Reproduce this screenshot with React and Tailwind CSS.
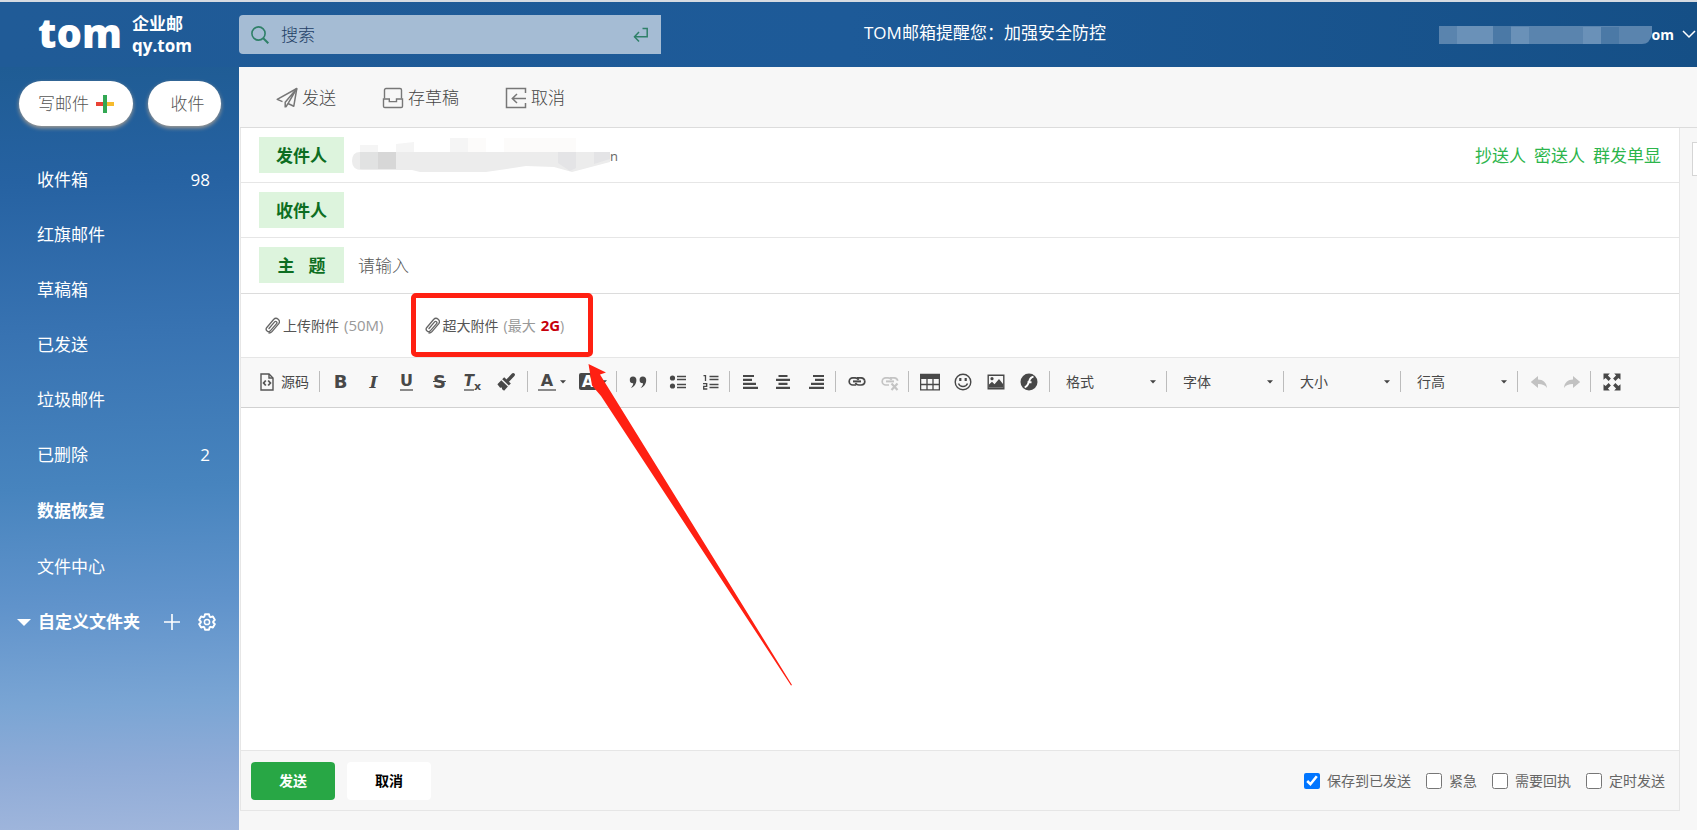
import React, { useState } from 'react';

const folders = [
  { name: '收件箱', count: 98 },
  { name: '红旗邮件' },
  { name: '草稿箱' },
  { name: '已发送' },
  { name: '垃圾邮件' },
  { name: '已删除', count: 2 },
  { name: '数据恢复', bold: true },
  { name: '文件中心' },
];

const combos = ['格式', '字体', '大小', '行高'];

/* ---------- icons ---------- */

const SearchIcon = () => (
  <svg width="18" height="18" viewBox="0 0 18 18" fill="none" stroke="#2f8068" strokeWidth="1.6">
    <circle cx="7.5" cy="7.5" r="6.6" />
    <path d="M12 12l5.3 5.3" strokeWidth="2" />
  </svg>
);

const EnterIcon = () => (
  <svg width="16" height="16" viewBox="0 0 16 16" fill="none" stroke="#2f8068" strokeWidth="1.5">
    <path d="M9.5 1.5h4.7v8.2H1.5" />
    <path d="M6 5L1.5 9.7L6 14.5" />
  </svg>
);

const SendIcon = () => (
  <svg width="22" height="22" viewBox="0 0 22 22" fill="none" stroke="#777" strokeWidth="1.5" strokeLinejoin="round">
    <path d="M6.5 14.6L1.2 12.4L20.8 1.5L17.8 19.2L12 16.5" />
    <path d="M20.8 1.5L9.2 15.2v5.4M20.8 1.5L12.4 15.8L9.8 20" />
  </svg>
);

const DraftIcon = () => (
  <svg width="22" height="22" viewBox="0 0 22 22" fill="none" stroke="#777" strokeWidth="1.4">
    <path d="M2.5 11.5V3a1.5 1.5 0 0 1 1.5-1.5h14a1.5 1.5 0 0 1 1.5 1.5v8.5" />
    <path d="M1.5 12h5.8v2.6h7.2V12h6v7.2a1.3 1.3 0 0 1-1.3 1.3H2.8a1.3 1.3 0 0 1-1.3-1.3z" />
  </svg>
);

const CancelIcon = () => (
  <svg width="22" height="22" viewBox="0 0 22 22" fill="none" stroke="#777" strokeWidth="1.5">
    <path d="M20.5 6V1.5h-19v19h19V16" />
    <path d="M21 11.5H7.5M12 7l-4.7 4.5L12 16" />
  </svg>
);

const ClipIcon = () => (
  <svg width="15" height="17" viewBox="0 0 15 17" fill="none" stroke="#666" strokeWidth="1.3" strokeLinecap="round">
    <path d="M4 11.5l5.6-6.6a1.3 1.3 0 0 1 2 1.7L5.5 13.6a2.4 2.4 0 0 1-3.7-3.1l6.8-8a3.3 3.3 0 0 1 5 4.3l-6.6 7.8a4 4 0 0 1-3 1.4" />
  </svg>
);

const GearIcon = () => (
  <svg width="18" height="18" viewBox="0 0 18 18" fill="none" stroke="#fff" strokeWidth="1.9" strokeLinejoin="round">
    <path d="M7 1.3h4l.6 2.3 1 .6 2.3-.7 2 3.4-1.7 1.6v1l1.7 1.6-2 3.4-2.3-.7-1 .6-.6 2.3H7l-.6-2.3-1-.6-2.3.7-2-3.4 1.7-1.6v-1L1.1 6.9l2-3.4 2.3.7 1-.6z" />
    <circle cx="9" cy="9" r="2.6" strokeWidth="1.5" />
  </svg>
);

const Caret = () => (
  <svg width="6" height="4" viewBox="0 0 6 4" fill="#444">
    <path d="M0 .3h6L3 3.6z" />
  </svg>
);

const Icon = ({ children, w = 18 }) => (
  <svg width={w} height="18" viewBox={`0 0 ${w} 18`} fill="none" stroke="#484848">
    {children}
  </svg>
);

const BrushIcon = () => (
  <Icon>
    <path d="M16.2 1.8L11 7.2" strokeWidth="3.4" strokeLinecap="round" />
    <path d="M7.2 4.2l6.6 6.3-2 2L5.2 6.2z" fill="#484848" stroke="none" />
    <path d="M4.3 7.2l6.6 6.3-3.8 4.2-2-1.5-.3-1.7-1.7.2-2.7-3.4z" fill="#484848" stroke="none" />
  </Icon>
);

const QuoteIcon = () => (
  <Icon>
    <path
      d="M4 3.5a3.3 3.3 0 0 1 3.4 3.6c0 4-2.4 7-5.6 8 1.7-1.6 2.5-3.3 2.4-4.8A3.3 3.3 0 0 1 .8 7 3.3 3.3 0 0 1 4 3.5zM13.8 3.5a3.3 3.3 0 0 1 3.4 3.6c0 4-2.4 7-5.6 8 1.7-1.6 2.5-3.3 2.4-4.8a3.3 3.3 0 0 1-3.4-3.3 3.3 3.3 0 0 1 3.2-3.5z"
      fill="#484848"
      stroke="none"
    />
  </Icon>
);

const BulletsIcon = () => (
  <Icon>
    <circle cx="3.5" cy="5" r="2.6" fill="#484848" stroke="none" />
    <circle cx="3.5" cy="13" r="2.6" fill="#484848" stroke="none" />
    <path d="M8 3.5h9M8 6.5h9M8 11.5h9M8 14.5h9" strokeWidth="1.3" />
  </Icon>
);

const NumbersIcon = () => (
  <Icon>
    <path d="M1.5 2.7h2V8M1 10.7h3.7v2.6H1.7V16h3.6" strokeWidth="1.3" />
    <path d="M7.5 3.5h9M7.5 6.5h9M7.5 11.5h9M7.5 14.5h9" strokeWidth="1.3" />
  </Icon>
);

const AlignIcon = ({ d }) => (
  <Icon>
    <path d={d} strokeWidth="2.2" />
  </Icon>
);

const LinkIcon = ({ broken }) => (
  <svg width="18" height="18" viewBox="0 0 18 18" fill="none" stroke={broken ? '#c4c4c4' : '#484848'} strokeWidth="1.7">
    <path d="M8 12H4.8a3.6 3.6 0 0 1 0-7.2h2.4q2.4 0 3.4 2M9 4.8h4.2q3 .2 3.6 3" />
    <path d="M5 8.4h8" strokeWidth="2" />
    {broken ? (
      <path d="M10.5 10.5l6 6.5M16.5 10.5l-6 6.5" strokeWidth="2.2" />
    ) : (
      <path d="M16.8 7.8q.2 4-3.6 4.2h-2.4q-2.4 0-3.4-2" />
    )}
  </svg>
);

const TableIcon = () => (
  <Icon w={20}>
    <path d="M.6 1.5h18.8v15.4H.6zM.6 11.5h18.8M7 5v12M13 5v12" strokeWidth="1.3" />
    <path d="M0 1h20v5H0z" fill="#484848" stroke="none" />
  </Icon>
);

const SmileIcon = () => (
  <Icon>
    <circle cx="9" cy="9" r="7.8" strokeWidth="1.4" />
    <path d="M6.3 5v3M11.7 5v3" strokeWidth="2.2" />
    <path d="M4.5 10.5c1.5 4 7.5 4 9 0" strokeWidth="1.4" />
  </Icon>
);

const ImageIcon = () => (
  <Icon>
    <path d="M1.2 2.2h15.6v13.6H1.2z" strokeWidth="1.4" />
    <circle cx="5" cy="5.7" r="1.6" fill="#484848" stroke="none" />
    <path d="M2 14.8v-3.3l3-2.8 2.5 2.5L12 6l4 5v3.8z" fill="#484848" stroke="none" />
  </Icon>
);

const FlashIcon = () => (
  <Icon>
    <circle cx="9" cy="9" r="8.5" fill="#484848" stroke="none" />
    <path d="M13.5 3.8c-3.3.2-3.6 2.5-4.6 5.2s-1.7 4.7-4.2 5.2M7.5 9.3h4" stroke="#fff" strokeWidth="1.9" />
  </Icon>
);

const UndoIcon = ({ flip }) => (
  <svg width="18" height="18" viewBox="0 0 18 18" fill="#c2c2c2" className={flip ? '-scale-x-100' : ''}>
    <path d="M.8 9L8 3v3.5c5 .1 8.6 3 9 8.5-2-3-4.5-4-9-4V15z" />
  </svg>
);

const MaximizeIcon = () => (
  <Icon>
    <path
      d="M.5.5h6.3L4.9 2.6l3 3-2.3 2.3-3-3L.5 6.8zM17.5.5v6.3l-2.1-1.9-3 3-2.3-2.3 3-3L11.2.5zM.5 17.5v-6.3l2.1 1.9 3-3 2.3 2.3-3 3 1.9 2.1zM17.5 17.5h-6.3l1.9-2.1-3-3 2.3-2.3 3 3 2.1-1.9z"
      fill="#484848"
      stroke="none"
    />
  </Icon>
);

const SourceIcon = () => (
  <svg width="14" height="18" viewBox="0 0 14 18" fill="none" stroke="#555" strokeWidth="1.4">
    <path d="M1 1h8l4 4v12H1z" />
    <path d="M9 1v4h4" />
    <path d="M5.8 7.5L3.6 10l2.2 2.5M8.2 7.5l2.2 2.5-2.2 2.5" strokeWidth="1.8" />
  </svg>
);

/* ---------- small parts ---------- */

const Divider = () => <span className="mr-1 ml-0.5 h-[21px] w-px shrink-0 bg-[#bcbcbc]" />;

const ToolButton = ({ label, children }) => (
  <button
    type="button"
    aria-label={label}
    className="flex h-7 w-[33px] shrink-0 items-center justify-center text-[18px] leading-[18px] text-[#484848]"
  >
    {children}
  </button>
);

const ColorButton = ({ label, children }) => (
  <button type="button" aria-label={label} className="flex h-7 w-[41px] shrink-0 items-center gap-1 pl-1.5 text-[#484848]">
    {children}
    <Caret />
  </button>
);

const FieldLabel = ({ children, htmlFor }) => (
  <label
    htmlFor={htmlFor}
    className="flex h-9 w-[85px] shrink-0 items-center justify-center bg-[#ddf4dd] pt-0.5 text-[17px] font-bold text-[#0d6e22]"
  >
    {children}
  </label>
);

const Check = ({ label, defaultChecked }) => (
  <label className="flex items-center gap-[7px] text-[14px] text-[#666]">
    <input type="checkbox" defaultChecked={defaultChecked} className="h-4 w-4 accent-[#0075ff]" />
    {label}
  </label>
);

const Header = () => (
  <header className="flex h-[67px] items-center border-t-2 border-[#d6dbe2] bg-gradient-to-r from-[#205b97] via-[#1d5a98] to-[#154f86] text-white">
    <a href="#home" className="flex w-[239px] shrink-0 items-center pl-[38px]">
      <span className="w-[94px] pb-1 font-['Open_Sans'] text-[40px] leading-[44px] font-extrabold">tom</span>
      <span className="flex flex-col text-[17px] leading-[22px] font-bold">
        <span>企业邮</span>
        <span>qy.tom</span>
      </span>
    </a>
    <div className="flex h-[39px] w-[422px] shrink-0 items-center rounded-l bg-[#a5bcd4] pr-3 pl-3">
      <SearchIcon />
      <input
        type="text"
        aria-label="搜索"
        placeholder="搜索"
        className="ml-3 min-w-0 flex-1 bg-transparent text-[17px] font-light outline-none placeholder:text-[#1f3f66]"
      />
      <button type="button" aria-label="回车搜索">
        <EnterIcon />
      </button>
    </div>
    <p className="ml-[203px] flex-1 pb-1 text-[17px] whitespace-nowrap">TOM邮箱提醒您：加强安全防控</p>
    <button type="button" className="flex shrink-0 items-center text-[14px] font-bold">
      <svg width="213" height="18" viewBox="0 0 213 18">
        <path d="M0 0h213v8q-2 10-10 10H0z" fill="#5a84ae" />
        <path d="M18 0h36v18H18zM72 1h18v17H72zM144 1h18v17h-18z" fill="#6a91b8" />
        <path d="M54 0h18v18H54zM162 1h18v17h-18z" fill="#4b79a6" />
      </svg>
      om
      <svg width="14" height="9" viewBox="0 0 14 9" fill="none" stroke="#fff" strokeWidth="1.5" className="mr-px ml-2">
        <path d="M1 1l6 6 6-6" />
      </svg>
    </button>
  </header>
);

const Sidebar = () => (
  <aside className="flex w-[239px] shrink-0 flex-col bg-[linear-gradient(178deg,#1f5c94_0%,#2662a2_15%,#3873b2_35%,#4784be_55%,#6093cb_70%,#7aa5d4_83%,#8eabd7_91%,#a0b6dc_100%)] text-[17px] text-white">
    <div className="flex gap-[15px] pt-3.5 pl-[19px]">
      <button
        type="button"
        className="flex h-[45px] w-[114px] items-center justify-center gap-[7px] rounded-full bg-white font-light text-[#555] shadow-[0_2px_4px_#a99f93]"
      >
        写邮件
        <svg width="18" height="18" viewBox="0 0 18 18">
          <path d="M0 7h9v4H0z" fill="#ea4335" />
          <path d="M9 7h9v4H9z" fill="#f6bb2d" />
          <path d="M7 0h4v18H7z" fill="#33a853" />
        </svg>
      </button>
      <button
        type="button"
        className="h-[45px] w-[73px] rounded-full bg-white pl-1.5 font-light text-[#555] shadow-[0_2px_4px_#a99f93]"
      >
        收件
      </button>
    </div>
    <nav className="mt-[26px]">
      {folders.map((f) => (
        <a
          key={f.name}
          href="#folder"
          className={`flex items-center justify-between pr-[29px] pl-[37px] ${f.bold ? 'h-[57px] font-bold' : 'h-[55px]'}`}
        >
          <span>{f.name}</span>
          {f.count && <span>{f.count}</span>}
        </a>
      ))}
      <div className="flex h-14 items-center pl-[17px] font-bold">
        <svg width="14" height="7" viewBox="0 0 14 7" fill="#fff">
          <path d="M0 0h14L7 7z" />
        </svg>
        <span className="ml-[7px]">自定义文件夹</span>
        <button type="button" aria-label="新建文件夹" className="ml-6">
          <svg width="16" height="16" viewBox="0 0 16 16" stroke="#fff" strokeWidth="1.6">
            <path d="M8 0v16M0 8h16" />
          </svg>
        </button>
        <button type="button" aria-label="管理文件夹" className="ml-[18px]">
          <GearIcon />
        </button>
      </div>
    </nav>
  </aside>
);

const EditorToolbar = () => (
  <div className="flex h-[50px] items-center border-b border-[#d1d1d1] bg-[#f8f8f8] pb-0.5 pl-[19px]">
    <button type="button" className="mr-2 flex shrink-0 items-center gap-[7px] text-[14px] text-[#484848]">
      <SourceIcon />
      源码
    </button>
    <Divider />
    <div className="flex pr-[3px]">
      <ToolButton label="加粗"><b className="font-['DejaVu_Sans']">B</b></ToolButton>
      <ToolButton label="倾斜"><i className="font-['DejaVu_Serif'] text-[17px] font-bold">I</i></ToolButton>
      <ToolButton label="下划线">
        <span className="border-b-2 border-[#8a8a8a] font-['DejaVu_Sans'] text-[16px] leading-4 font-bold">U</span>
      </ToolButton>
      <ToolButton label="删除线"><s className="font-['DejaVu_Sans'] font-bold">S</s></ToolButton>
      <ToolButton label="清除格式">
        <span className="border-b-2 border-[#8a8a8a] font-['DejaVu_Sans'] text-[15px] leading-4 font-bold italic">T</span>
        <span className="mt-2.5 font-['DejaVu_Sans'] text-[11px] leading-[11px] font-bold">x</span>
      </ToolButton>
      <ToolButton label="格式刷"><BrushIcon /></ToolButton>
    </div>
    <Divider />
    <ColorButton label="文本颜色">
      <span className="w-[18px] border-b-2 border-[#8a8a8a] text-center font-['DejaVu_Sans'] text-[16px] leading-4 font-bold">A</span>
    </ColorButton>
    <ColorButton label="背景颜色">
      <span className="w-[18px] rounded-xs bg-[#484848] text-center font-['DejaVu_Sans'] text-[16px] leading-[17px] font-bold text-white">A</span>
    </ColorButton>
    <Divider />
    <ToolButton label="引用"><QuoteIcon /></ToolButton>
    <Divider />
    <ToolButton label="项目列表"><BulletsIcon /></ToolButton>
    <ToolButton label="编号列表"><NumbersIcon /></ToolButton>
    <Divider />
    <ToolButton label="左对齐"><AlignIcon d="M1 3h11M1 6.9h9M1 10.8h13M1 14.8h15" /></ToolButton>
    <ToolButton label="居中"><AlignIcon d="M3.5 3h9M1 6.9h14M3.5 10.8h9M1 14.8h14" /></ToolButton>
    <ToolButton label="右对齐"><AlignIcon d="M5 3h11M7 6.9h9M3 10.8h13M1 14.8h15" /></ToolButton>
    <Divider />
    <ToolButton label="插入链接"><LinkIcon /></ToolButton>
    <ToolButton label="取消链接"><LinkIcon broken /></ToolButton>
    <Divider />
    <div className="flex pr-0.5">
      <ToolButton label="表格"><TableIcon /></ToolButton>
      <ToolButton label="表情"><SmileIcon /></ToolButton>
      <ToolButton label="图片"><ImageIcon /></ToolButton>
      <ToolButton label="动画"><FlashIcon /></ToolButton>
    </div>
    <Divider />
    {combos.map((name) => (
      <React.Fragment key={name}>
        <div className="relative flex w-[110px] shrink-0 items-center">
          <select aria-label={name} className="h-7 w-full appearance-none bg-transparent pl-3 text-[14px] text-[#484848]">
            <option>{name}</option>
          </select>
          <span className="pointer-events-none absolute right-2 flex">
            <Caret />
          </span>
        </div>
        <Divider />
      </React.Fragment>
    ))}
    <ToolButton label="撤销"><UndoIcon /></ToolButton>
    <ToolButton label="重做"><UndoIcon flip /></ToolButton>
    <Divider />
    <ToolButton label="全屏"><MaximizeIcon /></ToolButton>
  </div>
);

const ComposePanel = () => {
  const [subject, setSubject] = useState('');

  return (
    <section className="flex min-w-0 flex-1 flex-col border-r border-b border-l border-[#e6e6e6] bg-white">
      <div className="flex h-[55px] items-center border-b border-[#e6e6e6] pr-[18px] pl-[18px]">
        <FieldLabel>发件人</FieldLabel>
        <div className="ml-2 flex flex-1 items-center text-[13px] text-[#666]">
          <svg width="258" height="36" viewBox="0 0 258 36">
            <path d="M8 15Q0 15 0 24t10 9h50l8 2h66l40-6 28 1 18 5 38-10V15z" fill="#ececec" />
            <path d="M98 1h18v14H98zM44 7l18-2v10H44zM8 8h18v7H8z" fill="#f5f5f5" />
            <path d="M116 1h18v14h-18zM152 1h72v14h-72z" fill="#fcfbfa" />
            <path d="M26 15h18v17H26z" fill="#d7d7d7" />
            <path d="M8 15h18v17H8z" fill="#e1e2e2" />
            <path d="M206 15h18v16l-6 3-12-8zM242 15h16v7l-16 5z" fill="#e4e4e6" />
          </svg>
          <span className="pt-1">n</span>
        </div>
        <div className="flex gap-2 pt-0.5 text-[17px] text-[#2cb54c]">
          <a href="#cc">抄送人</a>
          <a href="#bcc">密送人</a>
          <a href="#separate">群发单显</a>
        </div>
      </div>
      <div className="flex h-[55px] items-center border-b border-[#e6e6e6] pl-[18px]">
        <FieldLabel htmlFor="to">收件人</FieldLabel>
        <input id="to" type="text" className="ml-3.5 flex-1 text-[17px] outline-none" />
      </div>
      <div className="flex h-14 items-center border-b border-[#dcdcdc] pb-px pl-[18px]">
        <FieldLabel htmlFor="subject">
          <span className="flex gap-3.5"><span>主</span><span>题</span></span>
        </FieldLabel>
        <input
          id="subject"
          type="text"
          placeholder="请输入"
          value={subject}
          onChange={(e) => setSubject(e.target.value)}
          className="ml-3.5 flex-1 pt-0.5 text-[17px] font-light outline-none placeholder:text-[#555]"
        />
      </div>

      {/* attachments */}
      <div className="flex h-16 border-b border-[#e6e6e6] pb-px pl-6 text-[14px] text-[#555]">
        <button type="button" className="flex items-center">
          <ClipIcon />
          <span className="ml-[3px]">上传附件</span>
          <span className="ml-[5px] text-[15px] text-[#999]">(50M)</span>
        </button>
        <div className="relative ml-[27px] flex pr-[29px] pl-3.5">
          <button type="button" className="flex items-center">
            <ClipIcon />
            <span className="ml-[3px]">超大附件</span>
            <span className="ml-[5px] text-[#999]">
              (最大<b className="ml-[5px] text-[15px] text-[#c7000b]">2G</b>)
            </span>
          </button>
          <div className="pointer-events-none absolute inset-x-0 -inset-y-px rounded-[5px] border-[5px] border-[#ff2012]" />
          <svg
            width="204"
            height="322"
            viewBox="0 0 204 322"
            fill="#ff2012"
            className="pointer-events-none absolute top-full left-full z-10 mt-2 -ml-[5px]"
          >
            <path d="M.5 0L18 8.5l-6 2L204 321l-1 .5L13 32L4 21.5z" />
          </svg>
        </div>
      </div>

      <EditorToolbar />
      <textarea aria-label="正文" className="w-full flex-1 resize-none bg-white p-3 outline-none" />

      <div className="flex h-[60px] items-center justify-between border-t border-[#e6e6e6] bg-[#f7f7f7] pr-3.5 pl-2.5">
        <div className="flex gap-3 text-[14px] font-bold">
          <button type="button" className="h-[38px] w-[84px] rounded bg-[#28a745] text-white">发送</button>
          <button type="button" className="h-[38px] w-[84px] rounded bg-white text-black">取消</button>
        </div>
        <div className="flex gap-[15px]">
          <Check label="保存到已发送" defaultChecked />
          <Check label="紧急" />
          <Check label="需要回执" />
          <Check label="定时发送" />
        </div>
      </div>
    </section>
  );
};

const App = () => (
  <div className="flex min-h-screen flex-col overflow-hidden bg-[#f7f7f7] font-['Open_Sans','Noto_Sans_CJK_SC',sans-serif]">
    <Header />
    <div className="flex flex-1">
      <Sidebar />
      <main className="flex min-w-0 flex-1 flex-col pb-[19px] pl-px">
        <div className="flex h-[61px] items-center gap-[46px] border-b border-[#dcdcdc] pt-0.5 pl-9 text-[17px] font-light text-[#444]">
          <button type="button" className="flex items-center gap-1"><SendIcon />发送</button>
          <button type="button" className="flex items-center gap-1"><DraftIcon />存草稿</button>
          <button type="button" className="flex items-center gap-1"><CancelIcon />取消</button>
        </div>
        <div className="flex flex-1">
          <ComposePanel />
          <div className="w-[17px] shrink-0 overflow-hidden pt-3.5 pl-3">
            <div className="h-[34px] w-6 border border-[#d5d5d5] bg-white" />
          </div>
        </div>
      </main>
    </div>
  </div>
);

export default App;
